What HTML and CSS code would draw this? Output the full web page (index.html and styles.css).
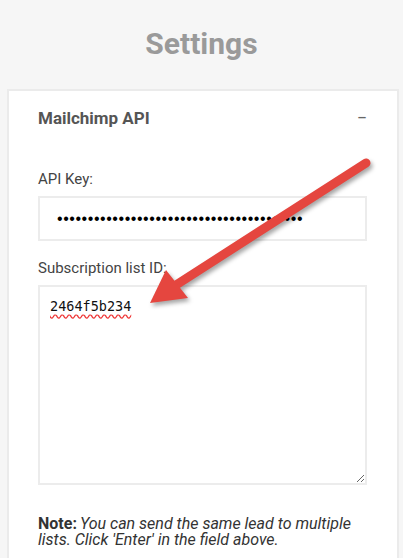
FILE: index.html
```html
<!DOCTYPE html>
<html>
  <head>
    <meta charset="UTF-8" />
    <title>Settings</title>
    <link rel="stylesheet" href="styles.css">
  </head>
  <body>
    <h1 class="title">Settings</h1>
    <div class="card">
      <div class="card-head">
        <h2>Mailchimp API</h2>
        <span class="toggle">&minus;</span>
      </div>
      <label class="field-label" for="apikey">API Key:</label>
      <input class="field" type="password" id="apikey" value="abcdefghijabcdefghijabcdefghijabcdefghij" />
      <label class="field-label" for="listid">Subscription list ID:</label>
      <textarea class="field area" id="listid">2464f5b234</textarea>
      <p class="note"><b>Note:</b><i>You can send the same lead to multiple lists. Click 'Enter' in the field above.</i></p>
    </div>
    <svg class="arrow" width="403" height="558" viewBox="0 0 403 558">
      <line x1="366" y1="163" x2="176" y2="285" stroke="#e5463f" stroke-width="9" stroke-linecap="round" />
      <polygon points="150,303 166,270 188,298" fill="#e5463f" />
    </svg>
  </body>
</html>
```
FILE: styles.css
```css
body {
  margin: 0;
  background-color: #f6f6f6;
  font-family: Roboto, "Liberation Sans", sans-serif;
  color: #444;
  position: relative;
  height: 558px;
  overflow: hidden;
}

.title {
  margin: 0;
  padding: 26px 0 0;
  height: 63px;
  text-align: center;
  font-size: 30px;
  font-weight: bold;
  color: #9a9a9a;
}

.card {
  margin: 0 4px 0 7px;
  background-color: #fff;
  border: 2px solid #ebebeb;
  padding: 16px 30px 40px 29px;
}

.card-head {
  display: flex;
  justify-content: space-between;
  align-items: center;
  margin-bottom: 42px;
}

.card-head h2 {
  margin: 0;
  font-size: 17px;
  font-weight: bold;
  color: #555;
}

.toggle {
  font-size: 18px;
  color: #666;
}

.field-label {
  display: block;
  font-size: 15px;
  color: #444;
  margin-bottom: 8px;
}

.field {
  display: block;
  box-sizing: border-box;
  width: 100%;
  border: 2px solid #ececec;
  background: #fff;
  outline: none;
  margin: 0 0 18px;
}

input.field {
  height: 45px;
  padding: 0 17px;
  font-family: "Liberation Sans", sans-serif;
  font-size: 16px;
  color: #000;
  letter-spacing: 0.55px;
}

.area {
  height: 200px;
  padding: 11px 10px;
  font-family: "DejaVu Sans Mono", monospace;
  font-size: 13.5px;
  color: #111;
  resize: both;
  text-decoration: underline wavy #e33;
  text-underline-offset: 3px;
  margin-bottom: 31px;
}

.note {
  margin: 0;
  font-size: 16px;
  line-height: 16px;
  color: #333;
}

.note b {
  margin-right: 3px;
}

.arrow {
  position: absolute;
  left: 0;
  top: 0;
  pointer-events: none;
  filter: drop-shadow(2px 3px 2px rgba(0, 0, 0, 0.35));
}
```
